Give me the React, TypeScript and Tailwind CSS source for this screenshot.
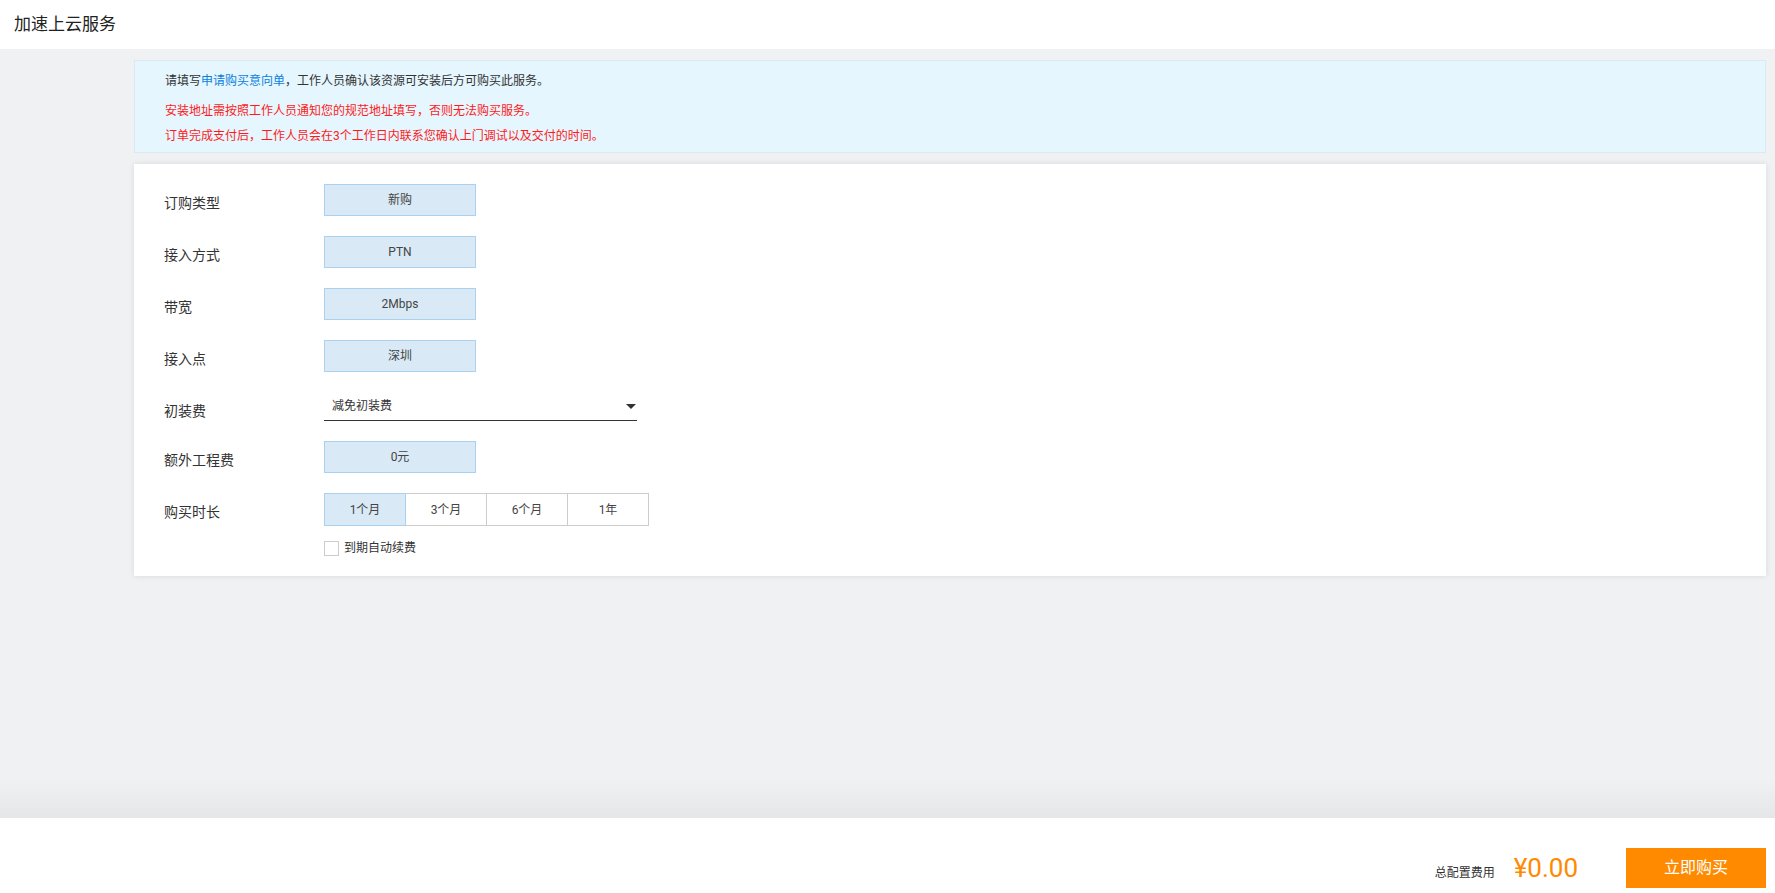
import { useState } from 'react'

const fields = [
  { label: '订购类型', value: '新购' },
  { label: '接入方式', value: 'PTN' },
  { label: '带宽', value: '2Mbps' },
  { label: '接入点', value: '深圳' },
]

const durations = ['1个月', '3个月', '6个月', '1年']

function Row({ label, children }: { label: string; children: React.ReactNode }) {
  return (
    <div className="flex items-start">
      <div className="w-[160px] shrink-0 pt-[9px] text-[14px] leading-[20px] text-[#333]">{label}</div>
      <div>{children}</div>
    </div>
  )
}

function ValueBox({ value }: { value: string }) {
  return (
    <div className="flex h-[32px] w-[152px] items-center justify-center border border-[#a9d1f0] bg-[#d9eaf6] text-[12px] text-[#444]">
      {value}
    </div>
  )
}

export default function App() {
  const [duration, setDuration] = useState('1个月')
  const [autoRenew, setAutoRenew] = useState(false)

  return (
    <div
      className="flex h-screen flex-col bg-[#f0f1f3] text-[#333]"
      style={{ fontFamily: 'Roboto, "Noto Sans CJK SC", sans-serif' }}
    >
      {/* 头部 */}
      <header className="flex h-[49px] shrink-0 items-center bg-white px-[14px] text-[17px] text-[#222]">
        加速上云服务
      </header>

      <main className="flex flex-1 flex-col">
        <div className="pl-[134px] pr-[9px] pt-[11px]">
          {/* 提示 */}
          <div className="h-[93px] border border-[#dde9f0] bg-[#e5f6fe] pl-[30px] pt-[10px] text-[12px]">
            <p className="leading-[20px] text-[#333]">
              请填写<a href="#" className="text-[#0c7fde]">申请购买意向单</a>，工作人员确认该资源可安装后方可购买此服务。
            </p>
            <div className="mt-[8px] leading-[25px] text-[#ff1a1a]">
              <p>安装地址需按照工作人员通知您的规范地址填写，否则无法购买服务。</p>
              <p>订单完成支付后，工作人员会在3个工作日内联系您确认上门调试以及交付的时间。</p>
            </div>
          </div>

          {/* 表单 */}
          <div className="mt-[11px] flex flex-col gap-[20px] bg-white pb-[19px] pl-[30px] pt-[20px] shadow-[0_0_6px_rgba(0,0,0,0.1)]">
            {fields.map((f) => (
              <Row key={f.label} label={f.label}>
                <ValueBox value={f.value} />
              </Row>
            ))}

            <Row label="初装费">
              <div className="flex h-[29px] w-[313px] items-start justify-between border-b border-[#333] pl-[8px] pr-[1px] pt-[4px] text-[12px] leading-[20px] text-[#333]">
                <span>减免初装费</span>
                <svg width="10" height="5" viewBox="0 0 10 5" className="mt-[8px]">
                  <path d="M0 0h10L5 5z" fill="#333" />
                </svg>
              </div>
            </Row>

            <Row label="额外工程费">
              <ValueBox value="0元" />
            </Row>

            <Row label="购买时长">
              <div>
                <div className="flex">
                  {durations.map((d, i) => (
                    <button
                      key={d}
                      onClick={() => setDuration(d)}
                      className={`relative flex h-[33px] w-[82px] items-center justify-center border text-[12px] text-[#444] ${i > 0 ? '-ml-px' : ''} ${
                        duration === d ? 'z-10 border-[#a9d1f0] bg-[#d9eaf6]' : 'border-[#ccc] bg-white'
                      }`}
                    >
                      {d}
                    </button>
                  ))}
                </div>
                <label className="mt-[13px] flex items-center text-[12px] text-[#333]">
                  <input
                    type="checkbox"
                    checked={autoRenew}
                    onChange={(e) => setAutoRenew(e.target.checked)}
                    className="h-[15px] w-[15px] appearance-none border border-[#ccc] bg-white"
                  />
                  <span className="ml-[5px]">到期自动续费</span>
                </label>
              </div>
            </Row>
          </div>
        </div>

        <div className="flex-1" />
        <div className="h-[38px] bg-linear-to-b from-[#f0f1f3] to-[#e5e6e8]" />
      </main>

      {/* 底部 */}
      <footer className="flex h-[75px] shrink-0 items-start justify-end bg-white pr-[9px] pt-[30px]">
        <div className="flex h-[40px] items-center">
          <div className="flex items-baseline">
            <span className="text-[12px] text-[#333]">总配置费用</span>
            <span className="ml-[19px] text-[26px] text-[#ff8a00]">¥0.00</span>
          </div>
          <button className="ml-[48px] h-[40px] w-[140px] bg-[#ff8a00] text-[16px] text-white">立即购买</button>
        </div>
      </footer>
    </div>
  )
}
